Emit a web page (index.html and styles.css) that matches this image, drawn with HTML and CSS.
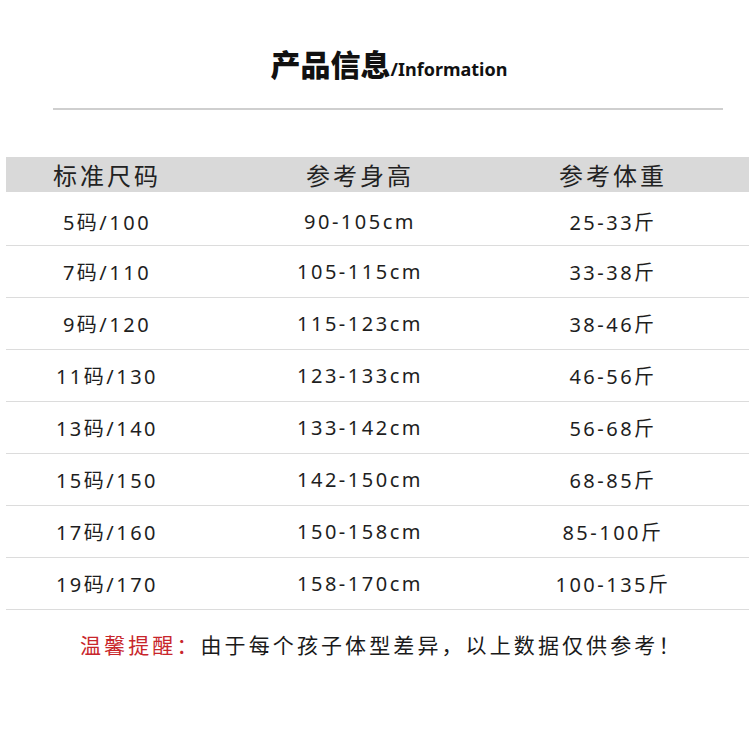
FILE: index.html
```html
<!DOCTYPE html>
<html lang="zh-CN">
<head>
<meta charset="utf-8">
<title>产品信息</title>
<link rel="stylesheet" href="styles.css">
</head>
<body>
<div class="page">
  <h1 class="title"><span class="title-cn">产品信息</span><span class="title-en">/Information</span></h1>
  <div class="rule"></div>
  <div class="table">
    <div class="row head"><div>标准尺码</div><div>参考身高</div><div>参考体重</div></div>
    <div class="row first"><div>5码/100</div><div>90-105cm</div><div>25-33斤</div></div>
    <div class="row"><div>7码/110</div><div>105-115cm</div><div>33-38斤</div></div>
    <div class="row"><div>9码/120</div><div>115-123cm</div><div>38-46斤</div></div>
    <div class="row"><div>11码/130</div><div>123-133cm</div><div>46-56斤</div></div>
    <div class="row"><div>13码/140</div><div>133-142cm</div><div>56-68斤</div></div>
    <div class="row"><div>15码/150</div><div>142-150cm</div><div>68-85斤</div></div>
    <div class="row"><div>17码/160</div><div>150-158cm</div><div>85-100斤</div></div>
    <div class="row"><div>19码/170</div><div>158-170cm</div><div>100-135斤</div></div>
  </div>
  <p class="note"><span class="note-label">温馨提醒：</span>由于每个孩子体型差异，以上数据仅供参考！</p>
</div>
</body>
</html>
```
FILE: styles.css
```css
* { box-sizing: border-box; }
html, body { margin: 0; padding: 0; background: #fff; }
body {
  width: 750px;
  height: 731px;
  overflow: hidden;
  font-family: "Noto Sans", "Noto Sans CJK SC", sans-serif;
  color: #1a1a1a;
}
.page { display: flex; flex-direction: column; }

.title {
  margin: 0;
  padding: 43px 0 0 28px;
  height: 86px;
  display: flex;
  justify-content: center;
  align-items: baseline;
  font-weight: 700;
  color: #111;
  line-height: 40px;
}
.title-cn {
  font-family: "Noto Sans CJK SC", sans-serif;
  font-size: 30px;
  font-weight: 900;
  letter-spacing: 0;
}
.title-en {
  font-family: "Noto Sans", "Noto Sans CJK SC", sans-serif;
  font-size: 18px;
  font-weight: 700;
}

.rule {
  margin: 22px 27px 0 53px;
  height: 2px;
  background: #cfcfcf;
}

.table {
  margin: 47px 1px 0 6px;
  display: flex;
  flex-direction: column;
}
.row {
  display: grid;
  grid-template-columns: 202px 304px 202px;
  align-items: center;
  height: 52px;
  border-bottom: 1.5px solid #dcdcdc;
  font-size: 20px;
  letter-spacing: 2.5px;
  color: #1e1e1e;
  font-family: "Noto Sans", "Noto Sans CJK SC", sans-serif;
}
.row > div { text-align: center; }
.row.first { height: 54px; padding-top: 5px; }
.row.head {
  height: 35px;
  background: #d9d9d9;
  border-bottom: none;
  font-family: "Noto Sans CJK SC", sans-serif;
  font-size: 24px;
  letter-spacing: 3px;
  color: #222;
  padding-top: 0;
  padding-bottom: 2px;
}

.note {
  margin: 19px 0 0 80px;
  font-family: "Noto Sans CJK SC", sans-serif;
  font-size: 21px;
  letter-spacing: 3.1px;
  color: #1a1a1a;
  line-height: 30px;
}
.note-label { color: #c8262b; }
```
